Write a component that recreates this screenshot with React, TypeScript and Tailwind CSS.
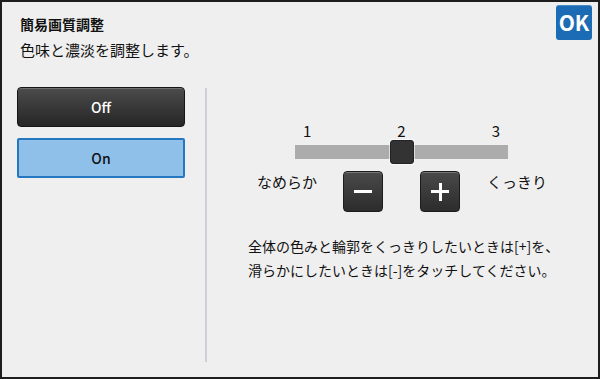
import React from 'react'

const font = { fontFamily: '"Noto Sans CJK JP", "Noto Sans", sans-serif' }

function SquareButton({ children }: { children: React.ReactNode }) {
  return (
    <button className="w-[40px] h-[41px] rounded-[4px] border border-[#1c1c1c] bg-gradient-to-b from-[#4a4a4a] to-[#2c2c2c] shadow-[inset_0_1px_0_rgba(255,255,255,0.25)] flex items-center justify-center">
      {children}
    </button>
  )
}

export default function App() {
  return (
    <div
      className="w-[600px] h-[379px] border-2 border-[#1e1e1e] bg-[#efefef] text-[#111] flex flex-col overflow-hidden"
      style={font}
    >
      {/* Header */}
      <div className="h-[83px] flex justify-between">
        <div className="pl-[18px] pt-[13px]">
          <div className="text-[14px] font-bold leading-[18px]">簡易画質調整</div>
          <div className="text-[15px] leading-[20px] mt-[7px]">色味と濃淡を調整します。</div>
        </div>
        <button className="mt-[3px] mr-[6px] w-[36px] h-[35px] rounded-[3px] bg-[#1b6cb4] text-white text-[21px] font-bold leading-none flex items-center justify-center shadow-[inset_0_1px_0_rgba(255,255,255,0.2)]">
          OK
        </button>
      </div>

      {/* Body */}
      <div className="flex flex-1">
        {/* Mode buttons */}
        <div className="pl-[15px] pt-[2px] flex flex-col gap-[11px]">
          <button className="w-[168px] h-[40px] rounded-[4px] border border-[#151515] bg-gradient-to-b from-[#4c4c4c] to-[#262626] text-white text-[14px] font-medium shadow-[inset_0_1px_0_rgba(255,255,255,0.2)]">
            Off
          </button>
          <button className="w-[168px] h-[40px] rounded-[2px] border-2 border-[#2677c2] bg-[#8ec0ea] text-[#111] text-[14px] font-medium">
            On
          </button>
        </div>

        <div className="ml-[20px] mt-[3px] w-[2px] h-[274px] bg-[#cfd0d6]" />

        {/* Adjust panel */}
        <div className="flex-1 flex flex-col">
          {/* Slider */}
          <div className="ml-[88px] mt-[37px] w-[213px]">
            <div className="flex justify-between px-[8px] text-[15px] leading-[18px]">
              <span>1</span>
              <span>2</span>
              <span>3</span>
            </div>
            <div className="relative h-[24px] flex items-center">
              <div className="w-full h-[14px] bg-[#acacac]" />
              <div className="absolute left-[95px] top-0 w-[24px] h-[24px] rounded-[3px] bg-[#333] border border-[#222] shadow-[0_0_0_1px_rgba(255,255,255,0.6)]" />
            </div>
          </div>

          {/* Step buttons */}
          <div className="flex items-start mt-[7px] ml-[50px] text-[15px]">
            <span className="w-[60px] mt-[1px] leading-[20px]">なめらか</span>
            <div className="ml-[26px]">
              <SquareButton>
                <span className="block w-[18px] h-[3px] bg-white" />
              </SquareButton>
            </div>
            <div className="ml-[37px]">
              <SquareButton>
                <span className="relative block w-[18px] h-[18px]">
                  <span className="absolute left-0 top-[7.5px] w-[18px] h-[3px] bg-white" />
                  <span className="absolute top-0 left-[7.5px] w-[3px] h-[18px] bg-white" />
                </span>
              </SquareButton>
            </div>
            <span className="ml-[27px] mt-[1px] leading-[20px]">くっきり</span>
          </div>

          {/* Description */}
          <div className="ml-[41px] mt-[22px] text-[14px] leading-[24px]">
            <p>全体の色みと輪郭をくっきりしたいときは[+]を、</p>
            <p>滑らかにしたいときは[-]をタッチしてください。</p>
          </div>
        </div>
      </div>
    </div>
  )
}
